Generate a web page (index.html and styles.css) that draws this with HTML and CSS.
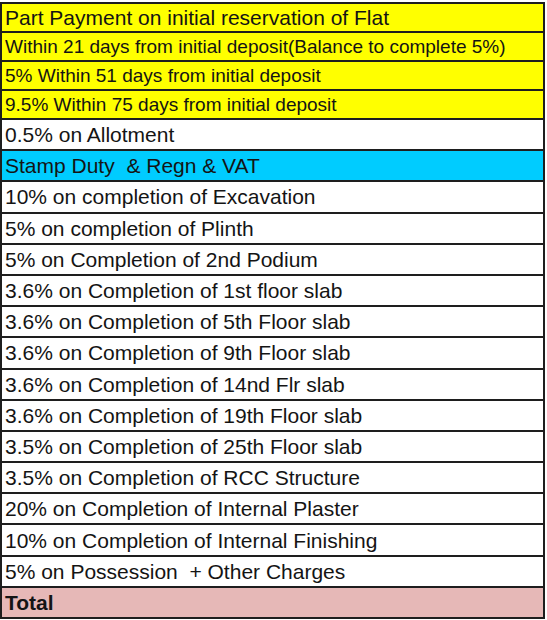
FILE: index.html
```html
<!DOCTYPE html>
<html>
<head>
<meta charset="utf-8">
<link rel="stylesheet" href="styles.css">
</head>
<body>
<table class="sched">
<tbody>
<tr class="yellow lead"><td>Part Payment on initial reservation of Flat</td></tr>
<tr class="yellow small"><td>Within 21 days from initial deposit(Balance to complete 5%)</td></tr>
<tr class="yellow small"><td>5% Within 51 days from initial deposit</td></tr>
<tr class="yellow small"><td>9.5% Within 75 days from initial deposit</td></tr>
<tr class="white"><td>0.5% on Allotment</td></tr>
<tr class="cyan"><td>Stamp Duty &nbsp;&amp; Regn &amp; VAT</td></tr>
<tr class="white"><td>10% on completion of Excavation</td></tr>
<tr class="white"><td>5% on completion of Plinth</td></tr>
<tr class="white"><td>5% on Completion of 2nd Podium</td></tr>
<tr class="white"><td>3.6% on Completion of 1st floor slab</td></tr>
<tr class="white"><td>3.6% on Completion of 5th Floor slab</td></tr>
<tr class="white"><td>3.6% on Completion of 9th Floor slab</td></tr>
<tr class="white"><td>3.6% on Completion of 14nd Flr slab</td></tr>
<tr class="white"><td>3.6% on Completion of 19th Floor slab</td></tr>
<tr class="white"><td>3.5% on Completion of 25th Floor slab</td></tr>
<tr class="white"><td>3.5% on Completion of RCC Structure</td></tr>
<tr class="white"><td>20% on Completion of Internal Plaster</td></tr>
<tr class="white"><td>10% on Completion of Internal Finishing</td></tr>
<tr class="white"><td>5% on Possession &nbsp;+ Other Charges</td></tr>
<tr class="total"><td>Total</td></tr>
</tbody>
</table>
</body>
</html>
```
FILE: styles.css
```css
html, body {
  margin: 0;
  padding: 0;
  background: #ffffff;
}
body {
  padding-top: 2px;
}
.sched {
  border-collapse: collapse;
  width: 545px;
  font-family: "Liberation Sans", Arial, sans-serif;
  color: #141414;
}
.sched td {
  border: 2px solid #1e1e1e;
  height: 29.2px;
  padding: 0 0 0 3px;
  font-size: 21px;
  line-height: 29px;
  white-space: nowrap;
  vertical-align: middle;
}
.yellow td {
  background: #ffff00;
  height: 27px;
  line-height: 27px;
}
.small td { font-size: 19px; }
.cyan td { background: #00ccff; }
.white td { background: #ffffff; }
.total td {
  background: #e6b8b7;
  font-weight: bold;
}
```
